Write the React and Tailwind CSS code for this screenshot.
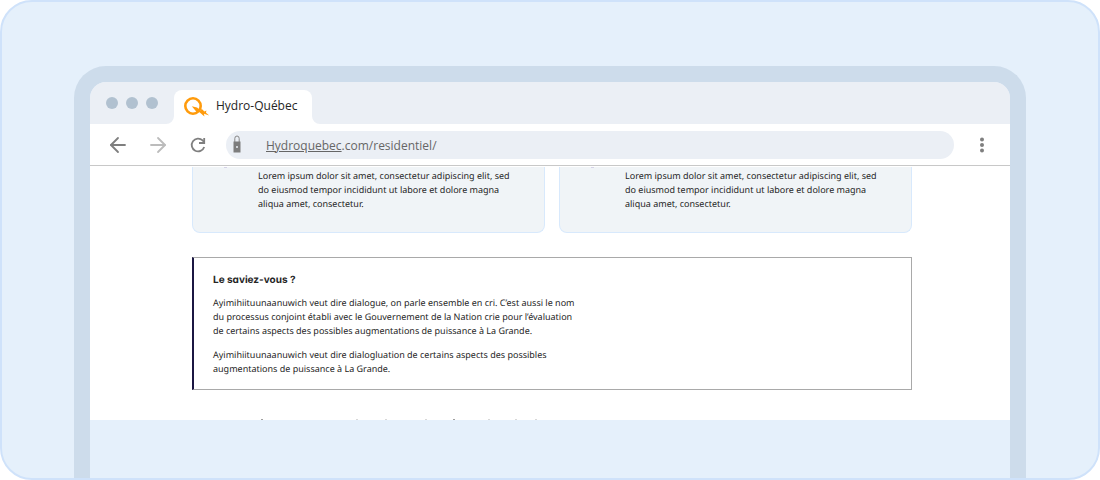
import { ArrowLeft, ArrowRight } from 'lucide-react'

const CARDS = ['alertes', 'services']

// tops of the heading that starts right under the fold
const CLIPPED_TOPS = [
  { x: 70, dark: true },
  { x: 165 },
  { x: 194 },
  { x: 234 },
  { x: 262, dark: true },
  { x: 297 },
  { x: 324 },
  { x: 344 },
]

function Logo() {
  return (
    <svg viewBox="0 0 26 22" className="w-[26px] h-[22px] shrink-0" fill="none" aria-hidden="true">
      <circle cx="9" cy="11" r="7.7" stroke="#ff9b0c" strokeWidth="2.6" />
      <path d="M7.8 11.2 L13 12.4 L16.8 15.6 L17.6 13.8 L20.4 16.4 L22.4 15.6 L22 17.8 L25.2 20.4 L20 18.8 L20.4 21.4 L14.4 16.2 L13 17.4 Z" fill="#ff9b0c" />
    </svg>
  )
}

function Padlock() {
  return (
    <svg viewBox="0 0 8 18" className="w-2 h-[18px] mb-0.5 shrink-0" fill="none" aria-hidden="true">
      <path d="M1.8 7 V3.5 a2.2 2.5 0 0 1 4.4 0 V7" stroke="#868686" strokeWidth="1" />
      <path d="M.5 6.5 h7 v11 h-7 z" fill="#7d7d7d" />
      <circle cx="4" cy="12" r="1" fill="#ebeff5" />
    </svg>
  )
}

function TitleBar() {
  return (
    <div className="flex items-end bg-[#ebeff5] rounded-t-2xl h-[42px] pl-4">
      <div className="flex items-center gap-2 h-[42px]">
        <span className="w-3 h-3 rounded-full bg-[#b1c1d0]" />
        <span className="w-3 h-3 rounded-full bg-[#b1c1d0]" />
        <span className="w-3 h-3 rounded-full bg-[#b1c1d0]" />
      </div>
      <svg viewBox="0 0 16 8" className="w-4 h-2" aria-hidden="true">
        <path d="M16 0 a8 8 0 0 1 -8 8 h8 z" fill="#fff" />
      </svg>
      <div className="flex items-center gap-1.5 h-[34px] pl-2.5 pr-[15px] pb-0.5 bg-white rounded-t-lg text-[12px] text-[#252525]">
        <Logo />
        <span className="whitespace-nowrap">Hydro-Québec</span>
      </div>
      <svg viewBox="0 0 8 8" className="w-2 h-2" aria-hidden="true">
        <path d="M0 0 a8 8 0 0 0 8 8 h-8 z" fill="#fff" />
      </svg>
    </div>
  )
}

function Toolbar() {
  return (
    <div className="flex items-center h-[42px] bg-white border-b border-[#c8c8c8] pl-4 pr-6">
      <button type="button" aria-label="Page précédente" className="text-[#7f7f7f]">
        <ArrowLeft className="w-6 h-6" strokeWidth={1.8} />
      </button>
      <button type="button" aria-label="Page suivante" className="ml-4 text-[#bcbcbc]">
        <ArrowRight className="w-6 h-6" strokeWidth={1.8} />
      </button>
      <button type="button" aria-label="Actualiser" className="ml-[18px]">
        <svg viewBox="0 0 20 20" className="w-5 h-5" fill="none" stroke="#7f7f7f" strokeWidth="1.8" aria-hidden="true">
          <path d="M16.2 12 A6.4 6.4 0 1 1 14.6 5.4 L16.4 7.4" />
          <path d="M16.2 3 V8 H11" />
        </svg>
      </button>
      <div className="flex items-center flex-1 h-7 ml-[18px] mr-6 pl-[7px] rounded-full bg-[#ebeff5] text-[12px] text-[#666]">
        <Padlock />
        <a href="#residentiel" className="ml-[25px] pt-0.5">
          <span className="underline">Hydroquebec</span>.com/residentiel/
        </a>
      </div>
      <button type="button" aria-label="Menu" className="w-2">
        <svg viewBox="0 0 8 20" className="w-2 h-5" fill="#7f7f7f" aria-hidden="true">
          <circle cx="4" cy="4.5" r="2" />
          <circle cx="4" cy="10" r="2" />
          <circle cx="4" cy="15.5" r="2" />
        </svg>
      </button>
    </div>
  )
}

function Card() {
  return (
    <article className="flex-1 flex items-start h-[66px] bg-[#f0f4f7] border border-t-0 border-[#d8e9fc] rounded-b-lg">
      <svg viewBox="0 0 65 2" className="w-[65px] h-0.5 shrink-0" aria-hidden="true">
        <path d="M31 0 h3" stroke="#b9b0d8" strokeWidth="1" />
      </svg>
      <p className="pt-0.5">
        Lorem ipsum dolor sit amet, consectetur adipiscing elit, sed
        <br />
        do eiusmod tempor incididunt ut labore et dolore magna
        <br />
        aliqua amet, consectetur.
      </p>
    </article>
  )
}

export default function App() {
  return (
    <div className="bg-white font-['Open_Sans',sans-serif]">
      <div className="flex flex-col min-h-screen rounded-[32px] border-2 border-[#cfe2fa] bg-[#e5f0fb] px-[72px] pt-16">
        <div className="flex-1 border-16 border-b-0 border-[#cddceb] rounded-t-[32px]">
          <TitleBar />
          <Toolbar />
          <main className="bg-white pt-px pl-[102px] pr-[98px] font-['Noto_Sans','Open_Sans',sans-serif] text-[9px] leading-[14px] text-[#252525] [text-rendering:geometricPrecision]">
            <div className="flex gap-3.5">
              {CARDS.map((c) => (
                <Card key={c} />
              ))}
            </div>
            <section className="mt-6 border border-[#a9a9a9] border-l-[#1b1642] border-l-2 pt-[15px] pl-[19px] pb-[13px]">
              <h2 className="font-['Inter',sans-serif] text-[10px] leading-[14px] font-bold [font-feature-settings:'cv11']">
                Le saviez-vous ?
              </h2>
              <p className="mt-[9px]">
                Ayimihiituunaanuwich veut dire dialogue, on parle ensemble en cri. C’est aussi le nom
                <br />
                du processus conjoint établi avec le Gouvernement de la Nation crie pour l’évaluation
                <br />
                de certains aspects des possibles augmentations de puissance à La Grande.
              </p>
              <p className="mt-2.5">
                Ayimihiituunaanuwich veut dire dialogluation de certains aspects des possibles
                <br />
                augmentations de puissance à La Grande.
              </p>
            </section>
            <svg viewBox="0 0 360 1" className="block w-[360px] h-px mt-[29px]" aria-hidden="true">
              {CLIPPED_TOPS.map((t) => (
                <rect key={t.x} x={t.x - 1} width="2" height="1" fill={t.dark ? '#a0a0a0' : '#d8d8d8'} />
              ))}
            </svg>
          </main>
        </div>
      </div>
    </div>
  )
}
